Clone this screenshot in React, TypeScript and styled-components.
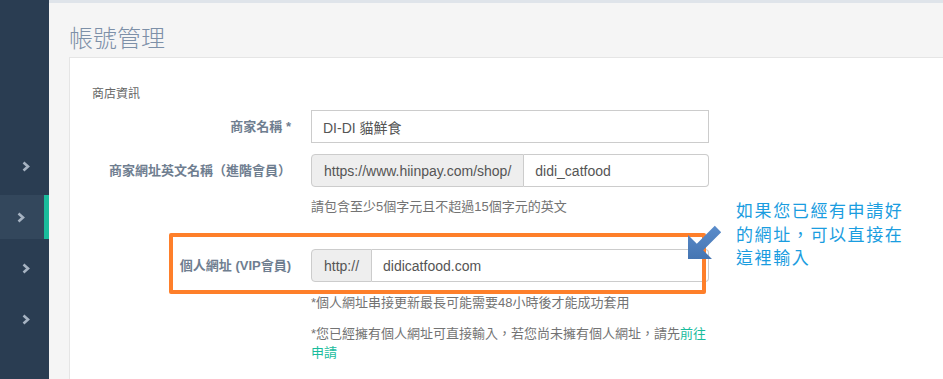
import styled, { createGlobalStyle } from "styled-components";

const GlobalStyle = createGlobalStyle`
  html, body {
    margin: 0;
    padding: 0;
    background: #f5f5f5;
  }
  body {
    font-family: "Liberation Sans", "Noto Sans CJK TC", sans-serif;
    font-size: 13px;
    color: #555;
  }
`;

const Layout = styled.div`
  display: flex;
  width: 943px;
  height: 379px;
  overflow: hidden;
`;

const Sidebar = styled.nav`
  width: 49px;
  flex-shrink: 0;
  background: #2a3d52;
  padding-top: 144px;
  display: flex;
  flex-direction: column;
  gap: 7px;
`;

const NavItem = styled.div<{ $active?: boolean }>`
  height: 44px;
  display: flex;
  align-items: center;
  padding-left: ${(p) => (p.$active ? "17px" : "22px")};
  background: ${(p) => (p.$active ? "#33475c" : "transparent")};
  border-right: ${(p) => (p.$active ? "5px solid #1abc9c" : "none")};
  color: #a6b3c2;
`;

const Main = styled.main`
  flex: 1;
  border-top: 3px solid #dfe4ea;
  padding: 17px 0 0 20px;
  display: flex;
  flex-direction: column;
`;

const Heading = styled.h1`
  margin: 0 0 4px;
  font-family: "Noto Sans CJK TC", sans-serif;
  font-weight: 300;
  font-size: 24px;
  line-height: 33px;
  color: #7d90a8;
`;

const Card = styled.section`
  flex: 1;
  background: #fff;
  border: 1px solid #e5e5e5;
  border-right: none;
  border-bottom: none;
  padding: 26px 0 0 22px;
`;

const SectionTitle = styled.div`
  font-family: "Noto Sans CJK TC", sans-serif;
  font-size: 12px;
  line-height: 17px;
  color: #666;
  margin-bottom: 9px;
`;

const Row = styled.div<{ $gap?: number }>`
  position: relative;
  display: grid;
  grid-template-columns: 199px 398px;
  column-gap: 20px;
  align-items: center;
  margin-top: ${(p) => p.$gap ?? 0}px;
`;

const Label = styled.label`
  text-align: right;
  font-weight: bold;
  font-size: 13px;
  line-height: 18px;
  color: #6f7e90;
`;

const TextInput = styled.div`
  height: 33px;
  box-sizing: border-box;
  border: 1px solid #ccc;
  padding: 0 11px;
  display: flex;
  align-items: center;
  font-size: 14px;
  color: #555;
  background: #fff;
`;

const Group = styled.div`
  display: flex;
  height: 33px;
`;

const Addon = styled.div`
  box-sizing: border-box;
  background: #eee;
  border: 1px solid #ccc;
  border-radius: 4px 0 0 4px;
  padding: 0 12px;
  display: flex;
  align-items: center;
  font-size: 14px;
  color: #555;
`;

const GroupInput = styled(TextInput)`
  flex: 1;
  border-left: none;
  border-radius: 0 4px 4px 0;
`;

const Help = styled.p<{ $gap?: number }>`
  grid-column: 2;
  margin: ${(p) => p.$gap ?? 0}px 0 0;
  font-size: 13px;
  line-height: 19px;
  color: #737373;
`;

const HelpBlock = styled.div`
  display: grid;
  grid-template-columns: 199px 398px;
  column-gap: 20px;
`;

const Link = styled.a`
  color: #18bc9c;
  text-decoration: none;
`;

const Highlight = styled.div`
  position: absolute;
  left: 77px;
  top: -16px;
  width: 537px;
  height: 61px;
  box-sizing: border-box;
  border: 4px solid #fe7f2a;
  border-radius: 2px;
  pointer-events: none;
`;

const Arrow = styled.svg`
  position: absolute;
  left: 594px;
  top: -25px;
`;

const Note = styled.div`
  position: absolute;
  left: 644px;
  top: -51px;
  width: 180px;
  font-family: "Noto Sans CJK TC", sans-serif;
  font-size: 17px;
  line-height: 23.5px;
  letter-spacing: 1.6px;
  color: #1a9de0;
`;

function Chevron() {
  return (
    <svg width="8" height="11" viewBox="0 0 8 11">
      <path d="M1.5 1.5 L6 5.5 L1.5 9.5" fill="none" stroke="currentColor" strokeWidth="2.6" />
    </svg>
  );
}

export default function App() {
  return (
    <Layout>
      <GlobalStyle />
      <Sidebar>
        <NavItem><Chevron /></NavItem>
        <NavItem $active><Chevron /></NavItem>
        <NavItem><Chevron /></NavItem>
        <NavItem><Chevron /></NavItem>
      </Sidebar>
      <Main>
        <Heading>帳號管理</Heading>
        <Card>
          <SectionTitle>商店資訊</SectionTitle>
          <Row>
            <Label>商家名稱 *</Label>
            <TextInput>DI-DI 貓鮮食</TextInput>
          </Row>
          <Row $gap={11}>
            <Label>商家網址英文名稱（進階會員）</Label>
            <Group>
              <Addon>https://www.hiinpay.com/shop/</Addon>
              <GroupInput>didi_catfood</GroupInput>
            </Group>
          </Row>
          <HelpBlock>
            <Help $gap={10}>請包含至少5個字元且不超過15個字元的英文</Help>
          </HelpBlock>
          <Row $gap={33}>
            <Label>個人網址 (VIP會員)</Label>
            <Group>
              <Addon>http://</Addon>
              <GroupInput>didicatfood.com</GroupInput>
            </Group>
            <Highlight />
            <Arrow width="37" height="37" viewBox="0 0 37 37">
              <defs>
                <linearGradient id="arrowFill" x1="0" y1="0" x2="0" y2="1">
                  <stop offset="0" stopColor="#5a8ccb" />
                  <stop offset="1" stopColor="#4575b2" />
                </linearGradient>
              </defs>
              <path
                d="M2 11 L10.8 19.8 L28.8 1.8 L35.2 8.2 L17.2 26.2 L26 35 L2 35 Z"
                fill="url(#arrowFill)"
              />
            </Arrow>
            <Note>如果您已經有申請好的網址，可以直接在這裡輸入</Note>
          </Row>
          <HelpBlock>
            <Help $gap={11}>*個人網址串接更新最長可能需要48小時後才能成功套用</Help>
            <Help $gap={12}>
              *您已經擁有個人網址可直接輸入，若您尚未擁有個人網址，請先<Link>前往申請</Link>
            </Help>
          </HelpBlock>
        </Card>
      </Main>
    </Layout>
  );
}
